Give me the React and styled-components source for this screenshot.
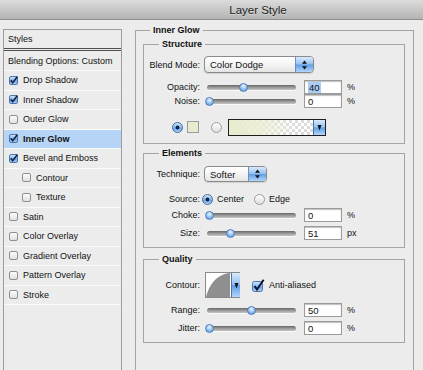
import React from 'react';
import styled, { createGlobalStyle } from 'styled-components';

const GlobalStyle = createGlobalStyle`
  html, body { margin: 0; padding: 0; background: #ececec; }
  body {
    font-family: "Liberation Sans", Arial, sans-serif;
    font-size: 9px;
    color: #111;
    overflow: hidden;
  }
  * { box-sizing: border-box; }
`;

const Window = styled.div`
  width: 423px;
  height: 370px;
  overflow: hidden;
  background: #ececec;
  display: flex;
  flex-direction: column;
`;

const TitleBar = styled.div`
  height: 20px;
  flex: none;
  display: flex;
  align-items: center;
  justify-content: center;
  padding-left: 93px;
  background: linear-gradient(#dcdcdc, #b4b4b4);
  border-bottom: 1px solid #8e8e8e;
  font-size: 11.5px;
  color: #1c1c1c;
  text-shadow: 0 1px 0 rgba(255, 255, 255, 0.4);
`;

const Body = styled.div`
  display: flex;
  align-items: flex-start;
  padding: 4px 0 0 3px;
`;

/* ---------- left list ---------- */
const LeftPanel = styled.div`
  margin-top: 5px;
  width: 119px;
  height: 420px;
  flex: none;
  border: 1px solid #9c9c9c;
  background: #ececec;
  display: flex;
  flex-direction: column;
`;

const StylesHeader = styled.div`
  height: 21px;
  display: flex;
  align-items: center;
  padding-left: 4px;
  border-bottom: 3px double #4d4d4d;
`;

const BlendRow = styled.div`
  height: 20px;
  display: flex;
  align-items: center;
  padding-left: 4px;
  border-bottom: 1px solid #fbfbfb;
`;

const StyleRow = styled.div`
  height: 19.5px;
  display: flex;
  align-items: center;
  gap: 5px;
  padding-left: ${(p) => (p.$indent ? 18 : 5)}px;
  border-bottom: 1px solid #fbfbfb;
  background: ${(p) => (p.$active ? '#b6d4f6' : 'transparent')};
  font-weight: ${(p) => (p.$active ? 'bold' : 'normal')};
`;

/* ---------- group boxes ---------- */
const OuterGroup = styled.fieldset`
  margin: 0 0 0 13px;
  width: 279px;
  min-width: 0;
  padding: 2px 8px 80px 7px;
  border: 1px solid #a4a4a4;
`;

const Group = styled.fieldset`
  margin: ${(p) => p.$mt || 0}px 0 0 0;
  min-width: 0;
  padding: ${(p) => p.$pt}px 0 ${(p) => p.$pb}px 0;
  border: 1px solid #a4a4a4;
`;

const Legend = styled.legend`
  font-weight: bold;
  line-height: 12px;
  padding: 0 3px;
  margin-left: ${(p) => p.$ml}px;
`;

const Row = styled.div`
  display: flex;
  align-items: center;
  height: ${(p) => p.$h}px;
  margin-top: ${(p) => p.$mt || 0}px;
  padding-left: ${(p) => p.$pl || 0}px;
`;

const Label = styled.div`
  width: 56px;
  flex: none;
  text-align: right;
  white-space: nowrap;
`;

/* ---------- popup select ---------- */
const SelectBox = styled.div`
  margin-left: 4px;
  width: ${(p) => p.$w}px;
  height: ${(p) => p.$h}px;
  display: flex;
  border: 1px solid #8a8a8a;
  border-radius: 4px;
  overflow: hidden;
  background: linear-gradient(#ffffff, #f3f3f3 55%, #e4e4e4);
  box-shadow: 0 1px 1px rgba(0, 0, 0, 0.12);
`;

const SelectText = styled.div`
  flex: 1;
  display: flex;
  align-items: center;
  padding-left: 5px;
  font-size: 9.5px;
`;

const Stepper = styled.div`
  width: 18px;
  flex: none;
  border-left: 1px solid #6a8fc0;
  background: linear-gradient(#dbeafc, #93c0f1 48%, #5f9de6 52%, #b3d6fb);
  display: flex;
  align-items: center;
  justify-content: center;
`;

/* ---------- slider ---------- */
const SliderBox = styled.div`
  position: relative;
  margin-left: 7px;
  width: 89px;
  height: 11px;
  flex: none;
  display: flex;
  align-items: center;
`;

const Track = styled.div`
  width: 100%;
  height: 5px;
  border-radius: 3px;
  background: linear-gradient(#666, #9a9a9a 50%, #c4c4c4);
  box-shadow: 0 1px 0 rgba(255, 255, 255, 0.7);
`;

const Thumb = styled.div`
  position: absolute;
  top: 1px;
  width: 9px;
  height: 9px;
  border-radius: 50%;
  border: 1px solid #4f7fb8;
  background: radial-gradient(circle at 50% 30%, #eef6ff 0, #9fc7f3 45%, #4b8fe0 100%);
`;

const NumInput = styled.div`
  margin-left: 8px;
  width: 38px;
  height: 14px;
  flex: none;
  display: flex;
  align-items: center;
  padding-left: 3px;
  background: #fff;
  border: 1px solid #9b9b9b;
  box-shadow: inset 0 1px 1px rgba(0, 0, 0, 0.25);
  font-size: 9.5px;
`;

const Selected = styled.span`
  background: #a9cdf6;
  padding: 0 1px;
`;

const Unit = styled.div`
  margin-left: 5px;
`;

/* ---------- colour row ---------- */
const Swatch = styled.div`
  margin-left: 4px;
  width: 12px;
  height: 12px;
  flex: none;
  background: #e8ebcf;
  border: 1px solid #9a9a9a;
`;

const GradientBox = styled.div`
  margin-left: ${(p) => p.$ml}px;
  width: 98px;
  height: 17px;
  flex: none;
  display: flex;
  border: 1px solid #1e1e1e;
`;

const GradientFill = styled.div`
  flex: 1;
  background:
    linear-gradient(to right, #e8ebcc 0%, rgba(236, 238, 212, 0.85) 35%, rgba(255, 255, 255, 0) 80%),
    repeating-conic-gradient(#ffffff 0 25%, #dcdcdc 0 50%) 0 0 / 6px 6px;
`;

const DropTab = styled.div`
  width: ${(p) => p.$w}px;
  flex: none;
  border-left: 1px solid #4a74aa;
  background: linear-gradient(#dbeafc, #93c0f1 48%, #5f9de6 52%, #b3d6fb);
  display: flex;
  align-items: center;
  justify-content: center;
`;

/* ---------- radio / check ---------- */
const OptionText = styled.div`
  margin-left: ${(p) => p.$ml}px;
  width: ${(p) => (p.$w ? `${p.$w}px` : 'auto')};
  flex: none;
`;

const Spacer = styled.div`
  width: ${(p) => p.$w}px;
  flex: none;
`;

const ContourBox = styled.div`
  margin-left: 5px;
  width: 35px;
  height: 26px;
  flex: none;
  display: flex;
  border: 1px solid #8a8a8a;
  background: #fff;
`;

const ContourArt = styled.div`
  flex: 1;
  display: flex;
`;

const Spot = styled.div`
  margin-left: ${(p) => p.$ml || 0}px;
  display: flex;
  flex: none;
`;

/* ---------- icons ---------- */
const Arrows = () => (
  <svg width="7" height="10" viewBox="0 0 7 10">
    <path d="M3.5 0.5 L6 3.8 L1 3.8 Z" fill="#111" />
    <path d="M3.5 9.5 L6 6.2 L1 6.2 Z" fill="#111" />
  </svg>
);

const DownTri = ({ w = 5, h = 7 }) => (
  <svg width={w} height={h} viewBox="0 0 5 7">
    <path d="M0.5 1 L4.5 1 L2.5 6.5 Z" fill="#111" />
  </svg>
);

const BlueGrad = ({ id }) => (
  <defs>
    <linearGradient id={id} x1="0" y1="0" x2="0" y2="1">
      <stop offset="0" stopColor="#d9e9fc" />
      <stop offset="0.5" stopColor="#86b9f0" />
      <stop offset="0.52" stopColor="#5d9be5" />
      <stop offset="1" stopColor="#b7d8fc" />
    </linearGradient>
    <linearGradient id={`${id}w`} x1="0" y1="0" x2="0" y2="1">
      <stop offset="0" stopColor="#ffffff" />
      <stop offset="1" stopColor="#dedede" />
    </linearGradient>
  </defs>
);

const SmallCheck = ({ checked }) => (
  <svg width="9" height="9" viewBox="0 0 9 9" style={{ flex: 'none' }}>
    <BlueGrad id="sc" />
    <rect x="0.5" y="0.5" width="8" height="8" rx="1.5"
      fill={checked ? 'url(#sc)' : 'url(#scw)'} stroke={checked ? '#4f75a8' : '#8f8f8f'} />
    {checked && <path d="M1.8 4.3 L3.7 6.8 L8.4 0.6" stroke="#17264a" strokeWidth="1.6" fill="none" />}
  </svg>
);

const BigCheck = () => (
  <svg width="13" height="13" viewBox="0 0 13 13">
    <BlueGrad id="bc" />
    <rect x="0.5" y="2.5" width="10" height="10" rx="2" fill="url(#bc)" stroke="#4f75a8" />
    <path d="M2.6 7 L5 10.5 L11.6 0.8" stroke="#0c1430" strokeWidth="2" fill="none" />
  </svg>
);

const Radio = ({ on }) => (
  <svg width="11" height="11" viewBox="0 0 11 11">
    <BlueGrad id="rd" />
    <circle cx="5.5" cy="5.5" r="5" fill={on ? 'url(#rd)' : 'url(#rdw)'} stroke={on ? '#46719f' : '#9a9a9a'} />
    {on && <circle cx="5.5" cy="5.5" r="1.9" fill="#14203c" />}
  </svg>
);

const ContourCurve = () => (
  <svg width="24" height="24" viewBox="0 0 24 24">
    <path d="M0 24 C 3 12, 10 2, 23 0 L 24 0 L 24 24 Z" fill="#8f8f8f" />
  </svg>
);

/* ---------- composed pieces ---------- */
const Slider = ({ frac }) => (
  <SliderBox>
    <Track />
    <Thumb style={{ left: `${-2 + frac * 84}px` }} />
  </SliderBox>
);

const SliderRow = ({ label, frac, value, unit, selected, mt, h = 14 }) => (
  <Row $h={h} $mt={mt}>
    <Label>{label}</Label>
    <Slider frac={frac} />
    <NumInput>{selected ? <Selected>{value}</Selected> : value}</NumInput>
    <Unit>{unit}</Unit>
  </Row>
);

const Select = ({ value, w, h }) => (
  <SelectBox $w={w} $h={h}>
    <SelectText>{value}</SelectText>
    <Stepper><Arrows /></Stepper>
  </SelectBox>
);

const leftItems = [
  { label: 'Drop Shadow', checked: true },
  { label: 'Inner Shadow', checked: true },
  { label: 'Outer Glow' },
  { label: 'Inner Glow', checked: true, active: true },
  { label: 'Bevel and Emboss', checked: true },
  { label: 'Contour', indent: true },
  { label: 'Texture', indent: true },
  { label: 'Satin' },
  { label: 'Color Overlay' },
  { label: 'Gradient Overlay' },
  { label: 'Pattern Overlay' },
  { label: 'Stroke' },
];

export default function App() {
  return (
    <Window>
      <GlobalStyle />
      <TitleBar>Layer Style</TitleBar>
      <Body>
        <LeftPanel>
          <StylesHeader>Styles</StylesHeader>
          <BlendRow>Blending Options: Custom</BlendRow>
          {leftItems.map((it) => (
            <StyleRow key={it.label} $indent={it.indent} $active={it.active}>
              <SmallCheck checked={it.checked} />
              {it.label}
            </StyleRow>
          ))}
        </LeftPanel>

        <OuterGroup>
          <Legend $ml={7}>Inner Glow</Legend>

          <Group $pt={6} $pb={7}>
            <Legend $ml={15}>Structure</Legend>
            <Row $h={17}>
              <Label>Blend Mode:</Label>
              <Select value="Color Dodge" w={110} h={17} />
            </Row>
            <SliderRow label="Opacity:" frac={0.4} value="40" unit="%" selected mt={7} />
            <SliderRow label="Noise:" frac={0} value="0" unit="%" />
            <Row $h={18} $mt={10} $pl={28}>
              <Radio on />
              <Swatch />
              <Spot $ml={12}><Radio /></Spot>
              <GradientBox $ml={6}>
                <GradientFill />
                <DropTab $w={12}><DownTri /></DropTab>
              </GradientBox>
            </Row>
          </Group>

          <Group $mt={3} $pt={7} $pb={7}>
            <Legend $ml={15}>Elements</Legend>
            <Row $h={16}>
              <Label>Technique:</Label>
              <Select value="Softer" w={63} h={16} />
            </Row>
            <Row $h={14} $mt={10}>
              <Label>Source:</Label>
              <Spot $ml={2}><Radio on /></Spot>
              <OptionText $ml={4} $w={37}>Center</OptionText>
              <Spot><Radio /></Spot>
              <OptionText $ml={4}>Edge</OptionText>
            </Row>
            <SliderRow label="Choke:" frac={0} value="0" unit="%" mt={2} />
            <SliderRow label="Size:" frac={0.245} value="51" unit="px" mt={4} />
          </Group>

          <Group $mt={5} $pt={7} $pb={7}>
            <Legend $ml={15}>Quality</Legend>
            <Row $h={26}>
              <Label>Contour:</Label>
              <ContourBox>
                <ContourArt><ContourCurve /></ContourArt>
                <Spacer $w={1} />
                <DropTab $w={9}><DownTri /></DropTab>
              </ContourBox>
              <Spot $ml={12}><BigCheck /></Spot>
              <OptionText $ml={4}>Anti-aliased</OptionText>
            </Row>
            <SliderRow label="Range:" frac={0.5} value="50" unit="%" mt={5} />
            <SliderRow label="Jitter:" frac={0} value="0" unit="%" mt={4} />
          </Group>
        </OuterGroup>
      </Body>
    </Window>
  );
}
